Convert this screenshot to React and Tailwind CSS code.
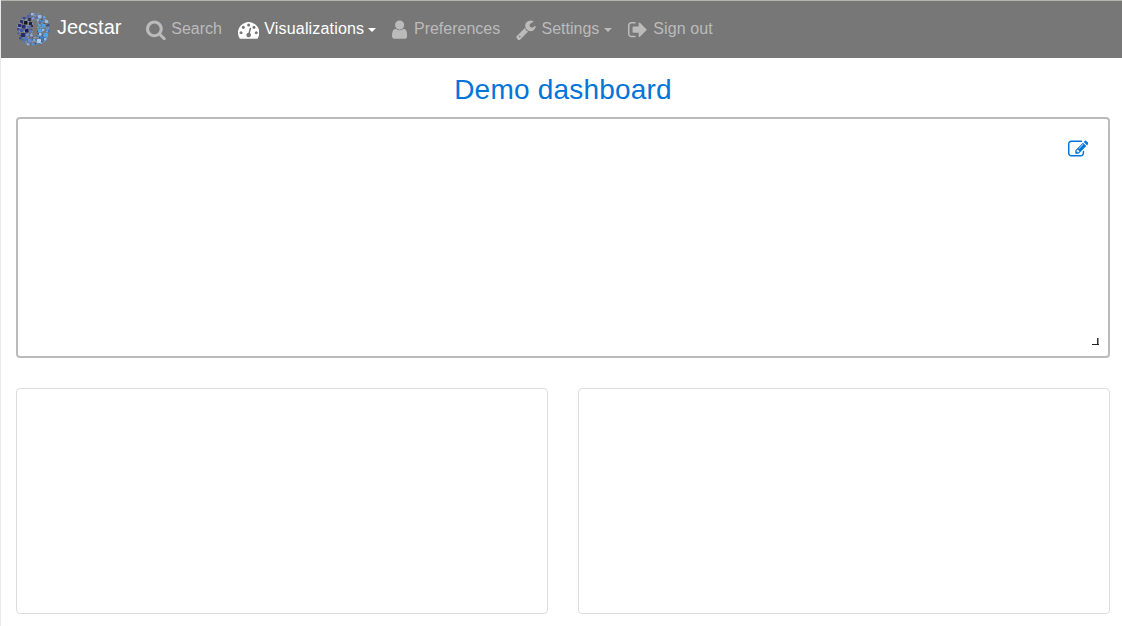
const ICONS = {
  search: {
    w: 1664,
    d: 'M1152 832q0-185-131.5-316.5T704 384 387.5 515.5 256 832t131.5 316.5T704 1280t316.5-131.5T1152 832zm512 832q0 52-38 90t-90 38q-54 0-90-38l-343-342q-179 124-399 124-143 0-273.5-55.5t-225-150-150-225T0 832t55.5-273.5 150-225 225-150T704 128t273.5 55.5 225 150 150 225T1408 832q0 220-124 399l343 343q37 37 37 90z',
  },
  gauge: {
    w: 1792,
    d: 'M384 1152q0-53-37.5-90.5T256 1024t-90.5 37.5T128 1152t37.5 90.5T256 1280t90.5-37.5T384 1152zm192-448q0-53-37.5-90.5T448 576t-90.5 37.5T320 704t37.5 90.5T448 832t90.5-37.5T576 704zm428 481l101-382q6-26-7.5-48.5T1059 725t-48 6.5-30 39.5l-101 382q-60 5-107 43.5t-63 98.5q-20 77 20 146t117 89 146-20 89-117q16-60-6-117t-72-91zm660-33q0-53-37.5-90.5T1536 1024t-90.5 37.5-37.5 90.5 37.5 90.5 90.5 37.5 90.5-37.5 37.5-90.5zM1024 512q0-53-37.5-90.5T896 384t-90.5 37.5T768 512t37.5 90.5T896 640t90.5-37.5T1024 512zm448 192q0-53-37.5-90.5T1344 576t-90.5 37.5T1216 704t37.5 90.5T1344 832t90.5-37.5T1472 704zm320 448q0 261-141 483-19 29-54 29H195q-35 0-54-29Q0 1414 0 1152q0-182 71-348t191-286 286-191 348-71 348 71 286 191 191 286 71 348z',
  },
  user: {
    w: 1280,
    d: 'M1280 1399q0 109-62.5 187t-150.5 78H213q-88 0-150.5-78T0 1399q0-85 8.5-160.5t31.500-152T98.500 955.5t94-93T327 826q131 128 313 128t313-128q76 0 134.500 36.500t94 93 58.500 131 31.500 152 8.500 160.500zM1024 512q0 159-112.500 271.500T640 896 368.500 783.500 256 512t112.500-271.500T640 128t271.500 112.500T1024 512z',
  },
  wrench: {
    w: 1664,
    d: 'M384 1472q0-26-19-45t-45-19-45 19-19 45 19 45 45 19 45-19 19-45zm644-420l-682 682q-37 37-90 37-52 0-91-37L59 1626q-38-36-38-90 0-53 38-91l681-681q39 98 114.500 173.500T1028 1052zm634-435q0 39-23 106-47 134-164.500 217.500T1216 1024q-185 0-316.500-131.500T768 576t131.500-316.500T1216 128q58 0 121.500 16.500T1445 191q16 11 16 28t-16 28l-293 169v224l193 107q5-3 79-48.500t135.500-81T1630 582q15 0 23.500 10t8.500 25z',
  },
  signOut: {
    w: 1664,
    d: 'M640 1440q0 4 1 20t.5 26.500-3 23.500-10 19.500-20.500 6.500H288q-119 0-203.500-84.500T0 1248V544q0-119 84.500-203.500T288 256h320q13 0 22.500 9.500T640 288q0 4 1 20t.5 26.500-3 23.500-10 19.500T608 384H288q-66 0-113 47t-47 113v704q0 66 47 113t113 47h312l11.500 1 11.500 3 8 5.500 7 9 2 13.500zm928-544q0 26-19 45l-544 544q-19 19-45 19t-45-19-19-45v-288H448q-26 0-45-19t-19-45V704q0-26 19-45t45-19h448V352q0-26 19-45t45-19 45 19l544 544q19 19 19 45z',
  },
  edit: {
    w: 1792,
    d: 'M888 1184l116-116-152-152-116 116v56h96v96h56zm440-720q-16-16-33 1L945 815q-17 17-1 33t33-1l350-350q17-17 1-33zm80 594v190q0 119-84.500 203.500T1120 1536H288q-119 0-203.500-84.500T0 1248V416q0-119 84.500-203.500T288 128h832q63 0 117 25 15 7 18 23 3 17-9 29l-49 49q-14 14-32 8-23-6-45-6H288q-66 0-113 47t-47 113v832q0 66 47 113t113 47h832q66 0 113-47t47-113v-126q0-13 9-22l64-64q15-15 35-7t20 29zm-96-738l288 288-672 672H640V992zm444 132l-92 92-288-288 92-92q28-28 68-28t68 28l152 152q28 28 28 68t-28 68z',
  },
};

function Icon({ name, className = 'h-[21.333px]' }) {
  const { w, d } = ICONS[name];
  return (
    <svg viewBox={`0 0 ${w} 1792`} fill="currentColor" className={`shrink-0 ${className}`} aria-hidden="true">
      <path d={d} />
    </svg>
  );
}

// Larger specks of the mosaic: x, y, size, colour
const SPECKS = [
  [15, 1, 2.5, '#a9bce8'], [11, 3, 2.5, '#4a5fae'], [19, 2, 2, '#5e83cc'], [22, 3, 3.5, '#9db8ee'],
  [27, 4, 2.5, '#5fa5df'], [7, 5, 2.5, '#39418d'], [12, 6, 3, '#30304a'], [16, 5, 2.5, '#8291d0'],
  [24, 8, 2.5, '#3b86d8'], [29, 8, 3, '#9ebbe9'], [4, 8, 3, '#2b2e79'], [8, 9, 3.5, '#17171f'],
  [13, 10, 3, '#20202a'], [21, 7, 2, '#86b9ef'], [26, 12, 3.5, '#48a4ef'], [31, 12, 2.5, '#38539b'],
  [2, 12, 3, '#252a72'], [6, 13, 3.5, '#262a75'], [11, 14, 2.5, '#556fc4'], [15, 13, 2, '#262a38'],
  [22, 12, 2.5, '#5b9fe3'], [30, 16, 3, '#5597d9'], [1, 16, 2.5, '#3d4787'], [4, 17, 3, '#3c58ad'],
  [9, 17, 3.5, '#171b59'], [13, 18, 2.5, '#6077c3'], [22, 17, 3.5, '#4ba5ef'], [26, 17, 2, '#a4c2ed'],
  [32, 18, 2, '#416ab8'], [1, 20, 2.5, '#5b65a3'], [5, 21, 4, '#25276f'], [10, 22, 2, '#789ad9'],
  [14, 22, 2.5, '#8da5e6'], [23, 21, 2.5, '#a9c7f2'], [28, 21, 4, '#4da5ed'], [3, 25, 2.5, '#414b94'],
  [8, 25, 3, '#4d76c7'], [20, 23, 2, '#407acd'], [24, 24, 3, '#3e7ec6'], [28, 26, 2.5, '#9bb7e5'],
  [7, 28, 2.5, '#4a78b7'], [12, 27, 3.5, '#5f8edb'], [17, 27, 2.5, '#5eb5ee'], [21, 27, 4, '#afccf3'],
  [26, 28, 2, '#4b77bd'], [11, 31, 2.5, '#8faadd'], [16, 31, 2.5, '#4d94df'], [20, 31, 2, '#5d80ba'],
  [24, 30, 2, '#71b7e6'],
];

const DUST_COLORS = ['#9199ae', '#4863a8', '#6b9fcc', '#4a4d66', '#92a7cd'];

function Logo() {
  const dust = [];
  for (let y = 1; y < 33; y += 2) {
    for (let x = 1; x < 34; x += 2) {
      const inCircle = (x - 16.5) ** 2 + (y - 16.5) ** 2 < 268;
      const inLetter = x > 16 && x < 20 && y > 8 && y < 25;
      const n = (x * 17 + y * 31 + x * y) % 11;
      if (inCircle && !inLetter && n < 9) dust.push([x + (n % 3) * 0.4, y, DUST_COLORS[n % 5]]);
    }
  }
  return (
    <svg viewBox="0 0 35 34" className="relative -top-px mr-1.5 h-[34px] w-[35px] shrink-0" aria-hidden="true">
      {dust.map(([x, y, c]) => <rect key={`${x}-${y}`} x={x} y={y} width="1.3" height="1.3" fill={c} />)}
      {SPECKS.map(([x, y, s, c]) => <rect key={`${x}-${y}`} x={x} y={y} width={s} height={s} rx=".7" fill={c} />)}
    </svg>
  );
}

function NavItem({ icon, label, active, caret = '', iconGap = 'mr-[5px]', tracking = '' }) {
  return (
    <a href="#" className={`flex items-center ${active ? 'text-white' : 'text-[#bbb]'}`}>
      <Icon name={icon} className={`h-[21.333px] ${iconGap}`} />
      <span className={`relative -top-px ${tracking}`}>{label}</span>
      {caret && <span className={`mt-px border-x-4 border-t-4 border-x-transparent border-t-current ${caret}`} />}
    </a>
  );
}

export default function App() {
  return (
    <div className="h-[626px] overflow-hidden border-l border-[#e8e8e8] bg-white font-['Liberation_Sans',Arial,sans-serif] text-base">
      <nav className="flex h-[58px] items-center border-t border-[#b2b5ad] bg-[#777] pl-[15px]">
        <a href="#" className="mr-[25px] flex items-center text-xl text-white">
          <Logo />
          <span className="relative -top-[3px]">Jecstar</span>
        </a>
        <div className="flex items-center gap-4">
          <NavItem icon="search" label="Search" />
          <NavItem icon="gauge" label="Visualizations" active caret="ml-1" tracking="tracking-[0.17px]" />
          <NavItem icon="user" label="Preferences" iconGap="mr-[6.5px]" />
          <NavItem icon="wrench" label="Settings" caret="ml-[4.7px]" iconGap="mr-[5.5px]" />
          <NavItem icon="signOut" label="Sign out" iconGap="mr-[5.5px]" tracking="tracking-[0.1px]" />
        </div>
      </nav>
      <main className="pl-[15px] pr-3">
        <h1 className="flex h-[59px] items-center justify-center pt-1 text-[28px] tracking-[0.2px] text-[#0275d8]">Demo dashboard</h1>
        <section className="flex h-[241px] flex-col items-end justify-between rounded border-2 border-[#bbb] pb-[11px] pr-[9px] pt-5">
          <button className="mr-[11px] text-[#0275d8]" aria-label="Edit">
            <Icon name="edit" className="h-[20.5px]" />
          </button>
          <span className="flex h-[7px] w-[7px] border-b border-[#222]">
            <span className="ml-[5px] w-px bg-[#333]" />
            <span className="w-px bg-[#999]" />
          </span>
        </section>
        <div className="mt-[30px] grid grid-cols-2 gap-[30px]">
          <section className="h-[226px] rounded border border-[#ddd]" />
          <section className="h-[226px] rounded border border-[#ddd]" />
        </div>
      </main>
    </div>
  );
}
